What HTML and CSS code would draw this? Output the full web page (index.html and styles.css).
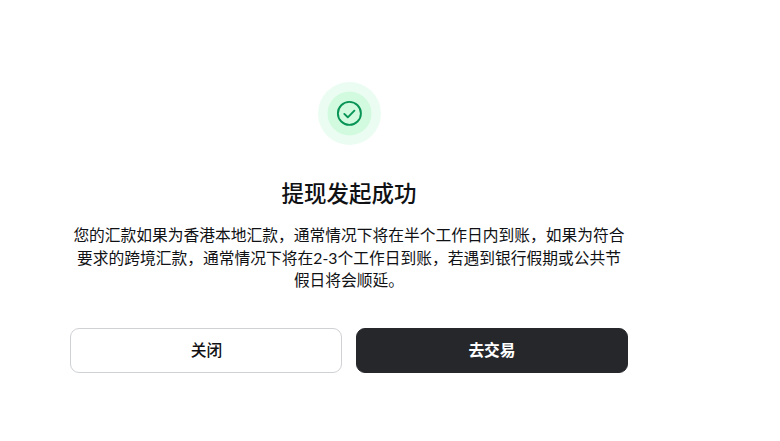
FILE: index.html
```html
<!DOCTYPE html>
<html lang="zh-CN">
<head>
    <meta charset="UTF-8">
    <meta name="viewport" content="width=device-width, initial-scale=1.0">
    <title>提现发起成功</title>
    <link rel="stylesheet" href="styles.css">
</head>
<body>
    <div class="result">
        <svg class="result-icon" viewBox="0 0 64 64" fill="none">
            <circle cx="32.5" cy="32.5" r="31.5" fill="#ebfdf2"/>
            <circle cx="32.5" cy="32.5" r="22" fill="#d1fade"/>
            <circle cx="32.4" cy="32.4" r="11.5" stroke="#079455" stroke-width="1.9"/>
            <path d="M27.3 32.9l3.5 3.4 6.6-6.6" stroke="#079455" stroke-width="1.9" stroke-linecap="round" stroke-linejoin="round"/>
        </svg>
        <h1>提现发起成功</h1>
        <p>您的汇款如果为香港本地汇款，通常情况下将在半个工作日内到账，如果为符合要求的跨境汇款，通常情况下将在2-3个工作日到账，若遇到银行假期或公共节假日将会顺延。</p>
        <div class="actions">
            <button class="btn">关闭</button>
            <button class="btn btn-primary">去交易</button>
        </div>
    </div>
</body>
</html>
```
FILE: styles.css
```css
body {
    margin: 0;
    background: #fff;
    color: #101114;
    font-family: "Noto Sans", "Noto Sans CJK SC", sans-serif;
}
.result {
    width: 558px;
    margin: 81px 0 0 70px;
    display: flex;
    flex-direction: column;
    align-items: center;
}
.result-icon {
    width: 64px;
    height: 64px;
}
h1 {
    margin: 32px 0 0;
    font-size: 22.5px;
    font-weight: 500;
    line-height: 34px;
}
p {
    margin: 13px 0 0;
    font-family: Lato, "Noto Sans CJK SC", sans-serif;
    font-size: 15.75px;
    line-height: 22.5px;
    text-align: center;
}
.actions {
    display: flex;
    gap: 14px;
    width: 100%;
    margin-top: 36px;
}
.btn {
    flex: 1;
    height: 45px;
    padding: 0 0 2px;
    border: 1px solid #d0d1d4;
    border-radius: 9px;
    background: #fff;
    color: #101114;
    font-family: inherit;
    font-size: 15.75px;
    font-weight: 500;
    text-indent: 1px;
    cursor: pointer;
}
.btn-primary {
    border-color: #26272b;
    background: #26272b;
    color: #fff;
    font-weight: 600;
    text-indent: 0;
}
```
